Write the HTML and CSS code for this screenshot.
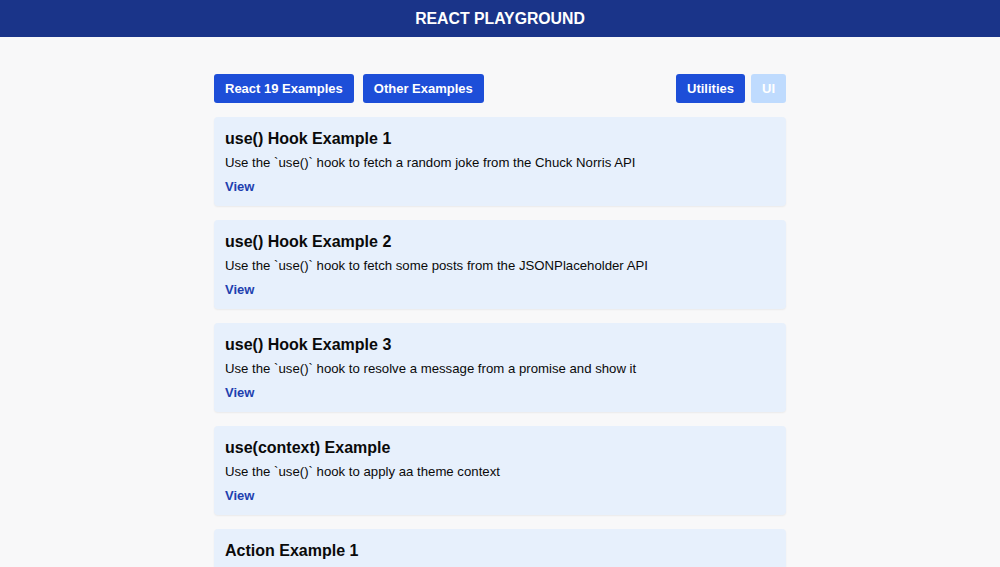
FILE: index.html
```html
<!DOCTYPE html>
<html>
<head>
<meta charset="utf-8">
<title>React Playground</title>
<link rel="stylesheet" href="styles.css">
</head>
<body>
<header class="topbar">REACT PLAYGROUND</header>
<main class="container">
  <nav class="tabs">
    <div class="tab-group">
      <button class="btn">React 19 Examples</button>
      <button class="btn">Other Examples</button>
    </div>
    <div class="tab-group tab-group-right">
      <button class="btn">Utilities</button>
      <button class="btn btn-disabled">UI</button>
    </div>
  </nav>
  <section class="cards">
    <article class="card">
      <h2 class="card-title">use() Hook Example 1</h2>
      <p class="card-desc">Use the `use()` hook to fetch a random joke from the Chuck Norris API</p>
      <a class="card-link" href="#">View</a>
    </article>
    <article class="card">
      <h2 class="card-title">use() Hook Example 2</h2>
      <p class="card-desc">Use the `use()` hook to fetch some posts from the JSONPlaceholder API</p>
      <a class="card-link" href="#">View</a>
    </article>
    <article class="card">
      <h2 class="card-title">use() Hook Example 3</h2>
      <p class="card-desc">Use the `use()` hook to resolve a message from a promise and show it</p>
      <a class="card-link" href="#">View</a>
    </article>
    <article class="card">
      <h2 class="card-title">use(context) Example</h2>
      <p class="card-desc">Use the `use()` hook to apply aa theme context</p>
      <a class="card-link" href="#">View</a>
    </article>
    <article class="card">
      <h2 class="card-title">Action Example 1</h2>
    </article>
  </section>
</main>
</body>
</html>
```
FILE: styles.css
```css
* { box-sizing: border-box; }
html, body { margin: 0; padding: 0; }
body {
  background: #f8f8f9;
  font-family: "Liberation Sans", Arial, sans-serif;
  color: #0a0a0a;
  overflow: hidden;
}
.topbar {
  height: 37px;
  background: #1a3489;
  color: #fff;
  font-weight: bold;
  font-size: 15.8px;
  display: flex;
  align-items: center;
  justify-content: center;
}
.container {
  width: 572px;
  margin: 37px auto 0;
}
.tabs {
  display: flex;
  justify-content: space-between;
  margin-bottom: 14px;
}
.tab-group { display: flex; gap: 9px; }
.tab-group-right { gap: 6px; }
.btn {
  height: 29px;
  padding: 0 11px;
  border: none;
  border-radius: 3px;
  background: #1d4ed8;
  color: #fff;
  font-family: inherit;
  font-weight: bold;
  font-size: 13px;
}
.btn-disabled { background: #bfdbfe; }
.cards { display: flex; flex-direction: column; gap: 14px; }
.card {
  background: #e7f0fc;
  border-radius: 4px;
  padding: 12px 11px 11px;
  height: 89px;
  box-shadow: 0 1px 2px rgba(0,0,0,0.06);
}
.card-title {
  margin: 0;
  font-size: 16px;
  font-weight: bold;
  line-height: 20px;
}
.card-desc {
  margin: 6px 0 0;
  font-size: 13.2px;
  line-height: 16px;
}
.card-link {
  display: inline-block;
  margin-top: 8px;
  font-size: 13px;
  line-height: 16px;
  font-weight: bold;
  color: #1e40af;
  text-decoration: none;
}
```
